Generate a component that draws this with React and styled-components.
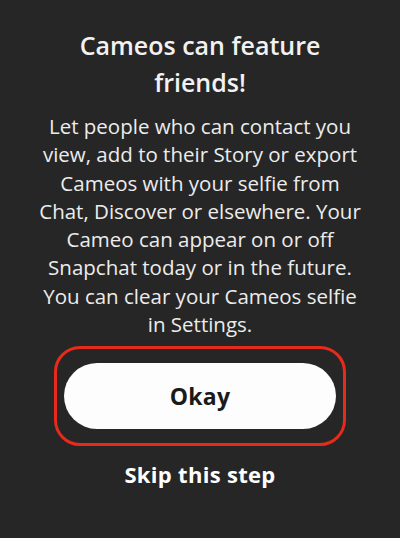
import React from 'react'
import styled, { createGlobalStyle } from 'styled-components'

const GlobalStyle = createGlobalStyle`
  html, body {
    margin: 0;
    padding: 0;
    background: #262626;
  }
  body {
    font-family: 'Open Sans', 'Noto Sans', sans-serif;
  }
`

const Screen = styled.div`
  width: 400px;
  height: 538px;
  background: #262626;
  display: flex;
  flex-direction: column;
  align-items: center;
  padding-top: 27px;
  box-sizing: border-box;
`

const Title = styled.h1`
  margin: 0;
  color: #f2f2f2;
  font-size: 25px;
  font-weight: 600;
  line-height: 37px;
  text-align: center;
`

const Body = styled.p`
  margin: 11px 0 0;
  color: #ececec;
  font-size: 20.5px;
  line-height: 28.3px;
  text-align: center;
  white-space: nowrap;
`

const Line = styled.span`
  display: block;
`

const Highlight = styled.div`
  margin-top: 8px;
  width: 292px;
  height: 100px;
  box-sizing: border-box;
  border: 3.5px solid #e62a1c;
  border-radius: 26px;
  display: flex;
  align-items: center;
  justify-content: center;
`

const OkayButton = styled.button`
  width: 272px;
  height: 66px;
  border: none;
  border-radius: 33px;
  background: #fdfdfd;
  color: #1a1a1a;
  font-family: inherit;
  font-size: 23px;
  font-weight: 700;
  letter-spacing: 0.3px;
  cursor: pointer;
`

const SkipLink = styled.button`
  margin-top: 12px;
  border: none;
  background: none;
  color: #ffffff;
  font-family: inherit;
  font-size: 22px;
  font-weight: 700;
  letter-spacing: 0.3px;
  cursor: pointer;
`

const titleLines = ['Cameos can feature', 'friends!']

const bodyLines = [
  'Let people who can contact you',
  'view, add to their Story or export',
  'Cameos with your selfie from',
  'Chat, Discover or elsewhere. Your',
  'Cameo can appear on or off',
  'Snapchat today or in the future.',
  'You can clear your Cameos selfie',
  'in Settings.',
]

export default function App() {
  return (
    <>
      <GlobalStyle />
      <Screen>
        <Title>
          {titleLines.map(line => (
            <Line key={line}>{line}</Line>
          ))}
        </Title>
        <Body>
          {bodyLines.map(line => (
            <Line key={line}>{line}</Line>
          ))}
        </Body>
        <Highlight>
          <OkayButton>Okay</OkayButton>
        </Highlight>
        <SkipLink>Skip this step</SkipLink>
      </Screen>
    </>
  )
}
